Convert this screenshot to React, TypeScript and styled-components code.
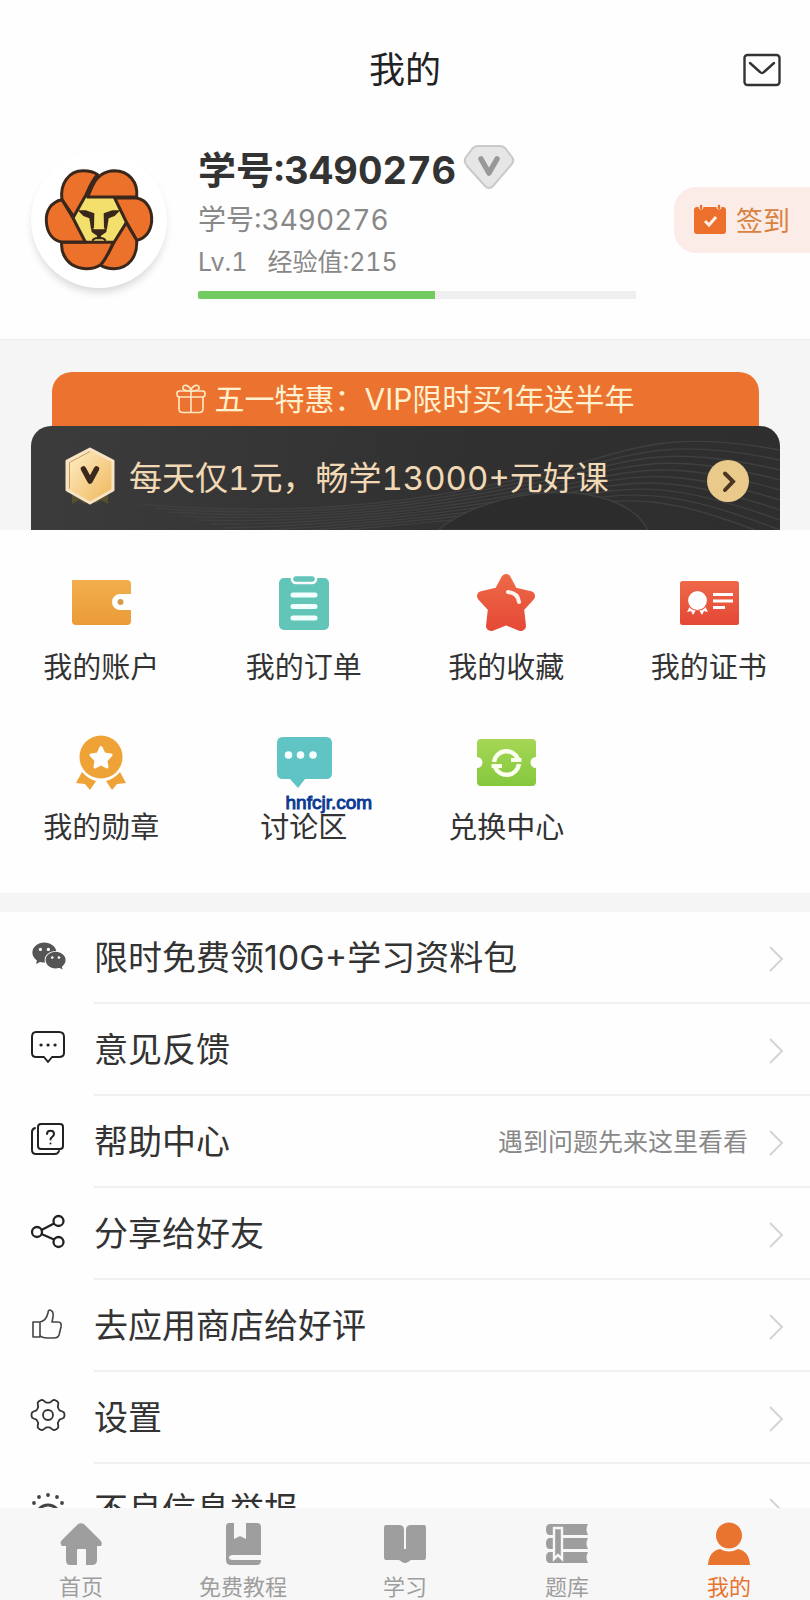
import React from "react";
import styled, { createGlobalStyle } from "styled-components";
import { AiFillWechat } from "react-icons/ai";

const GlobalStyle = createGlobalStyle`
  * { box-sizing: border-box; }
  body {
    margin: 0;
    background: #fefefe;
    color: #333;
    font-family: Inter, "Noto Sans CJK SC", sans-serif;
  }
  h1, h2, p { margin: 0; font-weight: 400; }
  button { border: 0; padding: 0; background: none; font: inherit; color: inherit; cursor: pointer; }
  a { color: inherit; text-decoration: none; }
  svg { display: block; flex: none; }
`;

const Screen = styled.div`
  display: flex;
  flex-direction: column;
  height: 100vh;
`;

const Content = styled.main`
  flex: 1;
  min-height: 0;
  overflow-y: auto;
  scrollbar-width: none;
`;

const Header = styled.header`
  display: grid;
  grid-template-columns: 1fr auto 1fr;
  align-items: center;
  height: 140px;
  padding: 0 29px;
`;

const Title = styled.h1`
  grid-column: 2;
  font-size: 36px;
  line-height: 52px;
  color: #222;
`;

const MailButton = styled.button`
  justify-self: end;
`;

const Profile = styled.section`
  display: flex;
  align-items: center;
  padding: 0 0 40px 31px;
`;

const Avatar = styled.div`
  display: grid;
  place-items: center;
  flex: none;
  width: 136px;
  height: 136px;
  border-radius: 50%;
  background: #fff;
  box-shadow: 0 6px 8px -2px rgba(0, 0, 0, 0.16);
`;

const Info = styled.div`
  flex: 1;
  min-width: 0;
  margin: 0 38px 0 31px;
  font-variant-numeric: tabular-nums;
`;

const NameRow = styled.div`
  display: flex;
  align-items: center;
  gap: 7px;
  height: 54px;
  white-space: nowrap;
`;

const Name = styled.h2`
  font-size: 38px;
  font-weight: 700;
`;

const StudentId = styled.p`
  padding-top: 4px;
  font-size: 28px;
  line-height: 44px;
  color: #888;
`;

const Level = styled.p`
  display: flex;
  gap: 20px;
  font-size: 25px;
  line-height: 40px;
  color: #888;
`;

const Track = styled.div`
  height: 8px;
  margin-top: 9px;
  background: #efefef;
`;

const Fill = styled.div`
  height: 100%;
  border-radius: 2px 0 0 2px;
  background: #72cb60;
`;

const CheckIn = styled.button`
  display: flex;
  align-items: center;
  gap: 10px;
  height: 66px;
  padding: 0 20px;
  border-radius: 22px 0 0 22px;
  background: #fbece8;
  color: #d9823f;
  font-size: 27px;
  white-space: nowrap;
`;

const Promo = styled.section`
  padding: 32px 30px 0 31px;
  border-top: 1px solid #eeeeee;
  background: #f5f5f5;
`;

const Offer = styled.a`
  display: flex;
  align-items: center;
  justify-content: center;
  gap: 8px;
  height: 54px;
  margin: 0 21px;
  border-radius: 20px 20px 0 0;
  background: #ec732f;
  color: #fff0cf;
  font-size: 30px;
  white-space: nowrap;
`;

const OfferText = styled.span`
  padding-bottom: 4px;
`;

const Vip = styled.a`
  position: relative;
  display: flex;
  align-items: center;
  height: 104px;
  padding: 0 31px 4px 34px;
  border-radius: 20px 20px 0 0;
  overflow: hidden;
  background: linear-gradient(100deg, #3c3c3c, #303030 60%, #2e2e2e);
  color: #f2d9b5;
  font-size: 33px;
  white-space: nowrap;
`;

const Waves = styled.svg`
  position: absolute;
  right: 0;
  bottom: 0;
`;

const VipText = styled.span`
  position: relative;
  flex: 1;
  margin-left: 14px;
  font-variant-numeric: tabular-nums;
`;

const VipArrow = styled.svg`
  position: relative;
  margin-top: 10px;
`;

const Features = styled.nav`
  display: grid;
  grid-template-columns: repeat(4, 1fr);
  row-gap: 44px;
  padding: 42px 0 45px;
`;

const Feature = styled.a`
  position: relative;
  display: flex;
  flex-direction: column;
  align-items: center;
  gap: 16px;
  font-size: 29px;
  line-height: 40px;
`;

const SiteMark = styled.span`
  position: absolute;
  top: 60px;
  left: 83px;
  font-family: "Liberation Sans", sans-serif;
  font-size: 19px;
  line-height: 22px;
  color: #0a3a94;
  -webkit-text-stroke: 1px #0a3a94;
`;

const Menu = styled.ul`
  margin: 0;
  padding: 0;
  list-style: none;
  border-top: 19px solid #f5f5f5;
`;

const MenuLink = styled.a`
  display: flex;
  align-items: center;
  height: 92px;
  padding-left: 30px;
`;

const MenuIcon = styled.span`
  display: grid;
  place-items: center;
  width: 36px;
  height: 36px;
  margin: 0 28px 6px 0;
  color: #444;
`;

const MenuBody = styled.span`
  display: flex;
  flex: 1;
  align-items: center;
  align-self: stretch;
  padding: 3px 26px 0 0;
  border-bottom: 2px solid #f0f0f0;
`;

const MenuLabel = styled.span`
  flex: 1;
  padding-bottom: 6px;
  font-size: 34px;
  white-space: nowrap;
`;

const MenuNote = styled.span`
  margin-right: 20px;
  padding-bottom: 6px;
  font-size: 25px;
  color: #888;
  white-space: nowrap;
`;

const TabBar = styled.nav`
  display: grid;
  grid-template-columns: repeat(5, 1fr);
  flex: none;
  height: 92px;
  background: #f7f7f7;
`;

const Tab = styled.a<{ $active?: boolean }>`
  display: flex;
  flex-direction: column;
  align-items: center;
  gap: 8px;
  padding-top: 14px;
  font-size: 22px;
  line-height: 26px;
  color: ${(p) => (p.$active ? "#e9742f" : "#9e9e9e")};
`;

const MailIcon = () => (
  <svg width="38" height="34" viewBox="0 0 38 34" fill="none" stroke="#333" strokeWidth="2.4" strokeLinecap="round" strokeLinejoin="round">
    <rect x="1.5" y="2" width="35" height="30" rx="3" />
    <path d="M7 10 17 19Q19 21 21 19L31 10" />
  </svg>
);

const LionIcon = () => (
  <svg width="112" height="104" viewBox="68 80 336 312" role="img" aria-label="狮子头像">
    <path d="M190 168H285L320 240 286 302H190L156 232Z" fill="#f3df6b" />
    <g fill="#ec722c" stroke="#3a271b" strokeWidth="9" strokeLinejoin="round">
      <path d="M125 175C118 128 145 88 188 88C206 88 222 92 232 100C216 116 206 140 197 160L160 226Z" />
      <path d="M202 167H349C354 122 325 88 282 88C247 89 229 106 216 134Z" />
      <path d="M283 170H349C382 176 396 208 394 240C391 270 376 290 349 297L318 242Z" />
      <path d="M318 244 349 297C352 345 325 381 282 382C266 382 250 378 240 371C260 348 267 330 278 308Z" />
      <path d="M124 303H279C266 330 257 354 240 371C215 387 178 386 152 368C131 351 122 327 124 303Z" />
      <path d="M125 175C92 181 76 210 78 240C80 274 97 297 124 302H195L158 230Z" />
    </g>
    <g fill="#3a271b">
      <path d="M172 207 196 207 222 216 221 260 212 263 207 231 189 224Z" />
      <path d="M300 207 276 207 250 216 251 260 260 263 265 231 283 224Z" />
      <path d="M212 258 222 264H250L260 258 258 272 242 283V294H230V283L214 272Z" />
    </g>
    <path d="M216 298Q222 288 236 290Q250 288 256 298" fill="none" stroke="#3a271b" strokeWidth="6" />
  </svg>
);

const GemIcon = () => (
  <svg width="52" height="46" viewBox="0 0 52 46">
    <path d="M15 2H37Q40 2 42 4L49 13Q52 17 48 21L30 42Q26 46 22 42L4 22Q0 17 3 13L10 4Q12 2 15 2Z" fill="#e6e6e6" stroke="#c9c9c9" strokeWidth="2" />
    <path d="M18 15 26 29 34 15" fill="none" stroke="#989898" strokeWidth="5.500" strokeLinecap="round" strokeLinejoin="round" />
  </svg>
);

const CalendarIcon = () => (
  <svg width="32" height="32" viewBox="0 0 32 32">
    <rect y="3" width="32" height="27" rx="3" fill="#ec6f2b" />
    <g stroke="#fbece8" strokeWidth="5" strokeLinecap="round"><path d="M7 2V3M25 2V3" /></g>
    <g stroke="#ec6f2b" strokeWidth="2.400" strokeLinecap="round"><path d="M7 2V4M25 2V4" /></g>
    <path d="M11 17 15 21 22 13" fill="none" stroke="#fff0e6" strokeWidth="3" />
  </svg>
);

const GiftIcon = () => (
  <svg width="30" height="30" viewBox="0 0 30 30" fill="none" stroke="#ffe8c4" strokeWidth="1.6">
    <rect x="1" y="7" width="28" height="6" rx="2.500" />
    <path d="M3 13V25Q3 28.500 7 28.500H23Q27 28.500 27 25V13M15 7V28M15 7C10 7 6 6 7 3C8 0 14 1 15 7C16 1 22 0 23 3C24 6 20 7 15 7" />
  </svg>
);

const VipBadge = () => (
  <svg width="50" height="58" viewBox="0 0 50 58">
    <defs>
      <linearGradient id="gold" x1="0" y1="0" x2="1" y2="1">
        <stop offset="0" stopColor="#fff0cb" /><stop offset="1" stopColor="#efb558" />
      </linearGradient>
    </defs>
    <path d="M7 46V57L14 53 20 57V46ZM30 46V57L36 53 43 57V46Z" fill="#57502e" />
    <path d="M25 2 48 14V43L25 56 2 43V14Z" fill="url(#gold)" stroke="#f7e4c6" strokeWidth="3" strokeLinejoin="round" />
    <path d="M4.500 41.500V15.500L25 4.500" fill="none" stroke="#c89c5d" strokeWidth="1" />
    <path d="M18.500 22 25 34 31.500 22" fill="none" stroke="#3b291c" strokeWidth="5.500" strokeLinecap="round" strokeLinejoin="round" />
  </svg>
);

const waveSteps = Array.from({ length: 10 }, (_, i) => i);

const WaveLines = () => (
  <Waves width="650" height="104" viewBox="0 0 650 104" fill="none" stroke="#3f3f3f" strokeWidth="1.400" aria-hidden="true">
    {waveSteps.map((i) => (
      <path key={i} d={`M${10 + i * 14} ${78 + i * 4}C190 ${94 + i} 320 ${70 + i * 3} 410 ${48 + i * 4}S530 ${2 + i * 7} 650 ${24 + i * 10}`} />
    ))}
    <path d="M308 104C365 58 490 50 518 104Z" fill="#2c2c2c" />
  </Waves>
);

const AccountIcon = () => (
  <svg width="60" height="60" viewBox="0 0 60 60">
    <defs><linearGradient id="wallet" x2="0" y2="1"><stop stopColor="#f2ae4c" /><stop offset="1" stopColor="#eb9c38" /></linearGradient></defs>
    <path d="M1 8H56Q60 8 60 12V22H49A8 8 0 0 0 49 38H60V49Q60 53 56 53H5Q1 53 1 49Z" fill="url(#wallet)" />
    <circle cx="49.500" cy="30" r="3" fill="#d69a4e" />
  </svg>
);

const OrderIcon = () => (
  <svg width="60" height="60" viewBox="0 0 60 60">
    <rect x="5" y="6" width="50" height="52" rx="5" fill="#62c5b8" />
    <rect x="18" y="3" width="24" height="8" rx="4" fill="#62c5b8" stroke="#fefefe" strokeWidth="2.500" />
    <path d="M19 23H41M19 34.500H41M19 46H41" stroke="#f2ffff" strokeWidth="5" strokeLinecap="round" />
  </svg>
);

const FavoriteIcon = () => (
  <svg width="60" height="60" viewBox="0 0 60 60">
    <defs><linearGradient id="star" gradientUnits="userSpaceOnUse" x1="0" y1="0" x2="0" y2="60"><stop stopColor="#ee6b48" /><stop offset="1" stopColor="#e54835" /></linearGradient></defs>
    <path d="M30 7 37 20 54 24 43 36 45 54 30 48 15 54 17 36 6 24 23 20Z" fill="url(#star)" stroke="url(#star)" strokeWidth="10" strokeLinejoin="round" />
    <path d="M32 20Q42 21 43 30" fill="none" stroke="#fff4ef" strokeWidth="4" strokeLinecap="round" />
  </svg>
);

const CertificateIcon = () => (
  <svg width="60" height="60" viewBox="0 0 60 60">
    <defs><linearGradient id="cert" x2="0" y2="1"><stop stopColor="#ee6848" /><stop offset="1" stopColor="#e44736" /></linearGradient></defs>
    <rect x="1" y="9" width="59" height="44" rx="2.500" fill="url(#cert)" />
    <path d="M11 34 8 40 12 39 14 43 17 38ZM26 34 29 40 25 39 23 43 20 38Z" fill="#fff" />
    <circle cx="18.500" cy="28.500" r="10" fill="#fff" stroke="#e85a41" strokeWidth="1.200" />
    <path d="M34 22.500H54M34 29H54M34 35.500H46" stroke="#fff" strokeWidth="3" />
  </svg>
);

const MedalIcon = () => (
  <svg width="60" height="60" viewBox="0 0 60 60">
    <g fill="#efa235">
      <circle cx="30" cy="25" r="21.500" />
      <path d="M11 40Q17 47 25 49L19 58 14 52 5 51ZM49 40Q43 47 35 49L41 58 46 52 55 51Z" />
    </g>
    <path d="M30 15.500 33 22 40 23 35 28.500 36 35 30 32 24 35 25 28.500 20 23 27 22Z" fill="#fff" stroke="#fff" strokeWidth="3" strokeLinejoin="round" />
  </svg>
);

const DiscussIcon = () => (
  <svg width="60" height="60" viewBox="0 0 60 60">
    <path d="M9 5H52Q58 5 58 11V41Q58 47 52 47H31L24 56 16 47H9Q3 47 3 41V11Q3 5 9 5Z" fill="#5fc4c3" />
    <g fill="#f4ffff"><circle cx="14.500" cy="23" r="3.800" /><circle cx="26.500" cy="23" r="3.800" /><circle cx="39" cy="23" r="3.800" /></g>
  </svg>
);

const ExchangeIcon = () => (
  <svg width="60" height="60" viewBox="0 0 60 60">
    <defs><linearGradient id="ticket" x2="0" y2="1"><stop stopColor="#a5d755" /><stop offset="1" stopColor="#85c83d" /></linearGradient></defs>
    <path d="M5 7H56Q60 7 60 11V25A5.500 5.500 0 0 0 60 36V50Q60 54 56 54H5Q1 54 1 50V36A5.500 5.500 0 0 0 1 25V11Q1 7 5 7Z" fill="url(#ticket)" />
    <path d="M18 30A12.500 12.500 0 0 1 42 27M43 32A12.500 12.500 0 0 1 19 35" fill="none" stroke="#faffee" strokeWidth="4.500" />
    <path d="M35 26H45.500V30H35ZM15.500 32H26V36H15.500Z" fill="#faffee" />
  </svg>
);

const FeedbackIcon = () => (
  <svg width="36" height="36" viewBox="0 0 36 36" fill="none" stroke="#222" strokeWidth="2" strokeLinejoin="round">
    <path d="M6 3H29Q34 3 34 8V24Q34 28 29 28H22L18 33 14 28H6Q2 28 2 24V8Q2 3 6 3Z" />
    <path d="M11 16H11.100M18 16H18.100M25 16H25.100" strokeWidth="3.200" strokeLinecap="round" />
  </svg>
);

const HelpIcon = () => (
  <svg width="36" height="36" viewBox="0 0 36 36" fill="none" stroke="#222" strokeWidth="2" strokeLinecap="round">
    <rect x="8" y="3" width="25" height="25" rx="3" />
    <path d="M5 7Q2 8 2 11V29Q2 33 6 33H25Q28 33 29 30M17 13C17 8.500 24 8.500 24 13C24 16 20.500 16 20.500 18.500M20.500 22.500V22.600" />
  </svg>
);

const ShareIcon = () => (
  <svg width="36" height="36" viewBox="0 0 36 36" fill="none" stroke="#222" strokeWidth="2.300">
    <circle cx="7" cy="19" r="5" /><circle cx="28.500" cy="8" r="5" /><circle cx="28.500" cy="29" r="5" />
    <path d="M11.500 17 24 10.500M11.500 21 24 26.500" />
  </svg>
);

const LikeIcon = () => (
  <svg width="36" height="36" viewBox="0 0 36 36" fill="none" stroke="#444" strokeWidth="1.600" strokeLinejoin="round">
    <path d="M3 17H10V32H3ZM10 17Q16 16 18 8Q18 5 20 5Q24 6 23 12L22 17H28Q32 17 31 22L29 30Q28 33 24 33H17Q13 33 10 31" />
  </svg>
);

const gearPoints = Array.from({ length: 72 }, (_, i) => {
  const a = (i / 72) * Math.PI * 2;
  const r = 14.4 + 2.2 * Math.tanh(1.8 * Math.cos(6 * a));
  return `${(18 + r * Math.cos(a)).toFixed(2)},${(18 + r * Math.sin(a)).toFixed(2)}`;
}).join(" ");

const SettingsIcon = () => (
  <svg width="36" height="36" viewBox="0 0 36 36" fill="none" stroke="#333" strokeWidth="1.800" strokeLinejoin="round">
    <polygon points={gearPoints} />
    <circle cx="18" cy="18" r="5" />
  </svg>
);

const ReportIcon = () => (
  <svg width="36" height="36" viewBox="0 0 36 36" fill="none" stroke="#444" strokeWidth="3">
    <path d="M6 28A12 12 0 0 1 30 28V35H6Z" />
    <path d="M18 6V6.100M9 8V8.100M27 8V8.100M4 14V14.100M32 14V14.100M18 21V21.100" strokeWidth="3.800" strokeLinecap="round" />
  </svg>
);

const Chevron = () => (
  <svg width="16" height="28" viewBox="0 0 16 28" fill="none" stroke="#d4d4d4" strokeWidth="2">
    <path d="M2 2 14 14 2 26" />
  </svg>
);

const HomeIcon = () => (
  <svg width="44" height="44" viewBox="0 0 44 44" fill="currentColor">
    <path d="M18.500 2.500Q22 0 25.500 2.500L41 18Q44 21 42 24H38V38Q38 43 33 43H27V28Q27 27 26 27H19Q18 27 18 28V43H11Q7 43 7 38V24H3Q0 21 3 18Z" />
  </svg>
);

const CourseIcon = () => (
  <svg width="44" height="44" viewBox="0 0 44 44" fill="currentColor">
    <path d="M8 1H13V17L19 14 25 17V1H36Q40 1 40 5V33H12Q8 33 8 35.500T12 38H40Q40 43 36 43H10Q5 43 5 38V5Q5 1 8 1Z" />
  </svg>
);

const StudyIcon = () => (
  <svg width="44" height="44" viewBox="0 0 44 44" fill="currentColor">
    <path d="M3 3H16Q21 3 21 8V27H23V8Q23 3 28 3H41Q43 3 43 6V35Q43 38 41 38H28L25 40Q22 42 19 40L16 38H3Q1 38 1 35V6Q1 3 3 3Z" />
  </svg>
);

const BankIcon = () => (
  <svg width="44" height="44" viewBox="0 0 44 44" fill="currentColor">
    <path d="M5 2H43Q40 7.500 43 13H5Q1 13 1 7.500T5 2ZM5 16H43Q40 21.500 43 27H5Q1 27 1 21.500T5 16ZM5 30H43Q40 35.500 43 41H5Q1 41 1 35.500T5 30Z" />
    <path d="M9 6H17V37L13 33 9 37Z" stroke="#f7f7f7" strokeWidth="2.400" />
  </svg>
);

const MeIcon = () => (
  <svg width="44" height="44" viewBox="0 0 44 44" fill="currentColor">
    <circle cx="22" cy="13.500" r="13" />
    <path d="M13 27Q22 32 31 27Q42 29 43 43H1Q2 29 13 27Z" />
  </svg>
);

const features = [
  { label: "我的账户", icon: <AccountIcon /> },
  { label: "我的订单", icon: <OrderIcon /> },
  { label: "我的收藏", icon: <FavoriteIcon /> },
  { label: "我的证书", icon: <CertificateIcon /> },
  { label: "我的勋章", icon: <MedalIcon /> },
  { label: "讨论区", icon: <DiscussIcon />, mark: "hnfcjr.com" },
  { label: "兑换中心", icon: <ExchangeIcon /> },
];

const menu = [
  { label: "限时免费领10G+学习资料包", icon: <AiFillWechat size={38} color="#555" /> },
  { label: "意见反馈", icon: <FeedbackIcon /> },
  { label: "帮助中心", icon: <HelpIcon />, note: "遇到问题先来这里看看" },
  { label: "分享给好友", icon: <ShareIcon /> },
  { label: "去应用商店给好评", icon: <LikeIcon /> },
  { label: "设置", icon: <SettingsIcon /> },
  { label: "不良信息举报", icon: <ReportIcon /> },
];

const tabs = [
  { label: "首页", icon: <HomeIcon /> },
  { label: "免费教程", icon: <CourseIcon /> },
  { label: "学习", icon: <StudyIcon /> },
  { label: "题库", icon: <BankIcon /> },
  { label: "我的", icon: <MeIcon />, active: true },
];

export default function App() {
  const progress = 54;
  return (
    <Screen>
      <GlobalStyle />
      <Content>
        <Header>
          <Title>我的</Title>
          <MailButton aria-label="消息"><MailIcon /></MailButton>
        </Header>
        <Profile>
          <Avatar><LionIcon /></Avatar>
          <Info>
            <NameRow><Name>学号:3490276</Name><GemIcon /></NameRow>
            <StudentId>学号:3490276</StudentId>
            <Level><span>Lv.1</span><span>经验值:215</span></Level>
            <Track role="progressbar" aria-label="经验值" aria-valuenow={progress}>
              <Fill style={{ width: `${progress}%` }} />
            </Track>
          </Info>
          <CheckIn><CalendarIcon />签到</CheckIn>
        </Profile>
        <Promo>
          <Offer href="#offer"><GiftIcon /><OfferText>五一特惠：VIP限时买1年送半年</OfferText></Offer>
          <Vip href="#vip">
            <WaveLines />
            <VipBadge />
            <VipText>每天仅1元，畅学13000+元好课</VipText>
            <VipArrow width="42" height="42" viewBox="0 0 42 42" aria-hidden="true">
              <circle cx="21" cy="21" r="21" fill="#e9ca8b" />
              <path d="M18 13.500 26 21.500 18 30" fill="none" stroke="#4b3621" strokeWidth="4" strokeLinecap="round" />
            </VipArrow>
          </Vip>
        </Promo>
        <Features>
          {features.map((f) => (
            <Feature key={f.label} href="#feature">
              {f.icon}
              {f.label}
              {f.mark && <SiteMark>{f.mark}</SiteMark>}
            </Feature>
          ))}
        </Features>
        <Menu>
          {menu.map((m) => (
            <li key={m.label}>
              <MenuLink href="#menu">
                <MenuIcon>{m.icon}</MenuIcon>
                <MenuBody>
                  <MenuLabel>{m.label}</MenuLabel>
                  {m.note && <MenuNote>{m.note}</MenuNote>}
                  <Chevron />
                </MenuBody>
              </MenuLink>
            </li>
          ))}
        </Menu>
      </Content>
      <TabBar>
        {tabs.map((t) => (
          <Tab key={t.label} href="#tab" $active={t.active}>
            {t.icon}
            {t.label}
          </Tab>
        ))}
      </TabBar>
    </Screen>
  );
}
